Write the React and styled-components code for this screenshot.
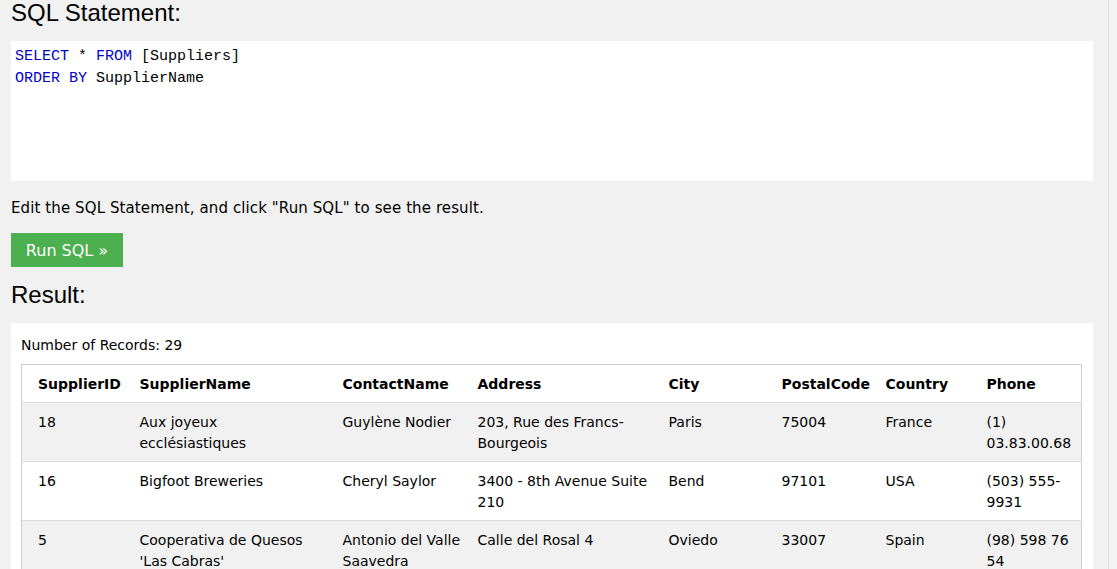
import React from "react";
import styled, { createGlobalStyle } from "styled-components";

const GlobalStyle = createGlobalStyle`
  html, body {
    margin: 0;
    padding: 0;
    background: #f4f4f4;
  }
  body {
    font-family: "DejaVu Sans", Verdana, sans-serif;
    font-size: 14px;
    color: #000;
  }
`;

const columns = [
  { key: "id", title: "SupplierID", width: 110 },
  { key: "name", title: "SupplierName", width: 203 },
  { key: "contact", title: "ContactName", width: 135 },
  { key: "address", title: "Address", width: 191 },
  { key: "city", title: "City", width: 113 },
  { key: "postal", title: "PostalCode", width: 104 },
  { key: "country", title: "Country", width: 101 },
  { key: "phone", title: "Phone", width: 103 },
];

const rows = [
  {
    id: "18",
    name: "Aux joyeux ecclésiastiques",
    contact: "Guylène Nodier",
    address: "203, Rue des Francs-Bourgeois",
    city: "Paris",
    postal: "75004",
    country: "France",
    phone: "(1) 03.83.00.68",
  },
  {
    id: "16",
    name: "Bigfoot Breweries",
    contact: "Cheryl Saylor",
    address: "3400 - 8th Avenue Suite 210",
    city: "Bend",
    postal: "97101",
    country: "USA",
    phone: "(503) 555-9931",
  },
  {
    id: "5",
    name: "Cooperativa de Quesos 'Las Cabras'",
    contact: "Antonio del Valle Saavedra",
    address: "Calle del Rosal 4",
    city: "Oviedo",
    postal: "33007",
    country: "Spain",
    phone: "(98) 598 76 54",
  },
];

const Shell = styled.div`
  display: flex;
  min-height: 100vh;
`;

const Main = styled.main`
  width: 1082px;
  padding: 0 15px 0 11px;
  background: #f1f1f1;
  border-right: 1px solid #dcdcdc;
`;

const Heading = styled.h2`
  margin: 0;
  font-family: "Liberation Sans", Arial, sans-serif;
  font-weight: normal;
  font-size: 24px;
  line-height: 26px;
  margin-bottom: ${(p) => p.$gap}px;
`;

const CodeBox = styled.div`
  background: #fff;
  height: 140px;
  box-sizing: border-box;
  padding: 5px 4px;
  font-family: "Liberation Mono", "Courier New", monospace;
  font-size: 15px;
  line-height: 22px;
  color: #000;
`;

const Keyword = styled.span`
  color: mediumblue;
`;

const Hint = styled.p`
  margin: 17px 0 14px;
  line-height: 21px;
  font-size: 15px;
  letter-spacing: 0.1px;
`;

const RunButton = styled.button`
  display: block;
  border: none;
  background: #4caf50;
  color: #fff;
  font-family: "DejaVu Sans", Verdana, sans-serif;
  font-size: 16px;
  height: 34px;
  width: 112px;
  padding: 0;
  margin-bottom: 15px;
  cursor: pointer;
`;

const ResultBox = styled.section`
  background: #fff;
  padding: 10px 10px 20px;
`;

const Count = styled.div`
  line-height: 21px;
  margin: 2px 0 8px;
`;

const Table = styled.table`
  width: 1061px;
  table-layout: fixed;
  border-collapse: collapse;
  border: 1px solid #ccc;
  font-size: 14px;
  line-height: 21px;
`;

const Row = styled.tr`
  background: ${(p) => (p.$shade ? "#f1f1f1" : "#fff")};
  border-bottom: 1px solid #ddd;
`;

const HeadCell = styled.th`
  text-align: left;
  font-weight: bold;
  padding: 9px 8px 7px;
  vertical-align: top;
  &:first-child {
    padding-left: 16px;
  }
`;

const Cell = styled.td`
  padding: 9px 8px 7px;
  vertical-align: top;
  &:first-child {
    padding-left: 16px;
  }
`;

export default function App() {
  return (
    <Shell>
      <GlobalStyle />
      <Main>
        <Heading $gap={15}>SQL Statement:</Heading>
        <CodeBox>
          <div>
            <Keyword>SELECT</Keyword> * <Keyword>FROM</Keyword> [Suppliers]
          </div>
          <div>
            <Keyword>ORDER BY</Keyword> SupplierName
          </div>
        </CodeBox>
        <Hint>Edit the SQL Statement, and click "Run SQL" to see the result.</Hint>
        <RunButton>Run SQL »</RunButton>
        <Heading $gap={15}>Result:</Heading>
        <ResultBox>
          <Count>Number of Records: 29</Count>
          <Table>
            <colgroup>
              {columns.map((c) => (
                <col key={c.key} style={{ width: c.width }} />
              ))}
            </colgroup>
            <thead>
              <Row>
                {columns.map((c) => (
                  <HeadCell key={c.key}>{c.title}</HeadCell>
                ))}
              </Row>
            </thead>
            <tbody>
              {rows.map((r, i) => (
                <Row key={r.id} $shade={i % 2 === 0}>
                  {columns.map((c) => (
                    <Cell key={c.key}>{r[c.key]}</Cell>
                  ))}
                </Row>
              ))}
            </tbody>
          </Table>
        </ResultBox>
      </Main>
    </Shell>
  );
}
